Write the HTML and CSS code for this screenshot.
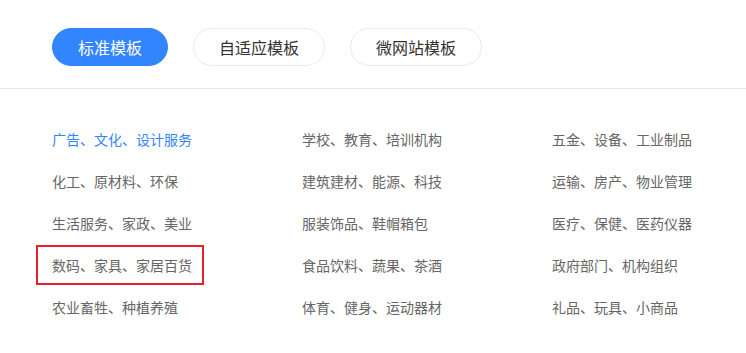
FILE: index.html
```html
<!DOCTYPE html>
<html lang="zh-CN">
<head>
    <meta charset="UTF-8">
    <title>模板分类</title>
    <link rel="stylesheet" href="styles.css">
</head>
<body>
    <div class="tabs">
        <button class="tab active">标准模板</button>
        <button class="tab">自适应模板</button>
        <button class="tab">微网站模板</button>
    </div>
    <ul class="cats">
        <li class="cur">广告、文化、设计服务</li>
        <li>学校、教育、培训机构</li>
        <li>五金、设备、工业制品</li>
        <li>化工、原材料、环保</li>
        <li>建筑建材、能源、科技</li>
        <li>运输、房产、物业管理</li>
        <li>生活服务、家政、美业</li>
        <li>服装饰品、鞋帽箱包</li>
        <li>医疗、保健、医药仪器</li>
        <li><span class="marked">数码、家具、家居百货</span></li>
        <li>食品饮料、蔬果、茶酒</li>
        <li>政府部门、机构组织</li>
        <li>农业畜牲、种植养殖</li>
        <li>体育、健身、运动器材</li>
        <li>礼品、玩具、小商品</li>
    </ul>
</body>
</html>
```

FILE: styles.css
```css
body {
    margin: 0;
    background: #fff;
    font-family: "Noto Sans CJK SC", "Noto Sans", sans-serif;
}
.tabs {
    display: flex;
    gap: 25px;
    padding: 28px 52px 22px;
    border-bottom: 1px solid #e6e6e6;
}
.tab {
    height: 38px;
    padding: 0 25px;
    border: 1px solid #ebebeb;
    border-radius: 19px;
    background: #fff;
    color: #333;
    font-family: inherit;
    font-size: 16px;
    line-height: 36px;
    cursor: pointer;
}
.tab.active {
    background: #3385ff;
    border-color: #3385ff;
    color: #fff;
}
.cats {
    display: grid;
    grid-template-columns: 250px 250px 1fr;
    margin: 0;
    padding: 29px 0 0 52px;
    list-style: none;
}
.cats li {
    height: 42px;
    line-height: 42px;
    font-size: 14px;
    color: #666;
    white-space: nowrap;
}
.cats li.cur {
    color: #3385ff;
}
.marked {
    position: relative;
}
.marked::after {
    content: "";
    position: absolute;
    left: -16px;
    top: -10px;
    width: 164px;
    height: 36px;
    border: 2px solid #e6212a;
}
```
